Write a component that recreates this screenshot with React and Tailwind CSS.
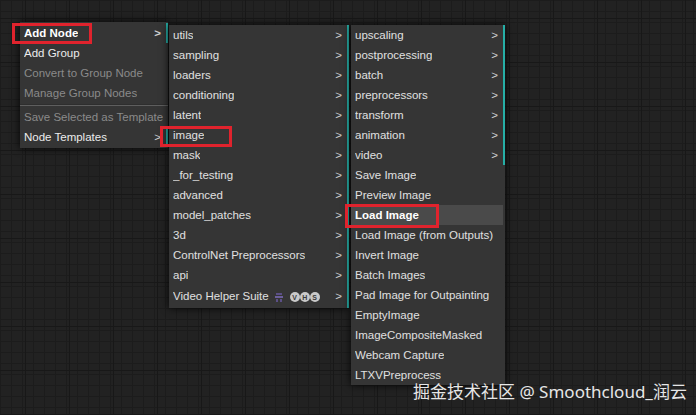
import React from 'react';

const font = "font-['Liberation_Sans',Arial,sans-serif]";

const menu1 = [
  { label: 'Add Node', sub: true, tone: 'bold' },
  { label: 'Add Group', tone: 'bright' },
  { label: 'Convert to Group Node', tone: 'off' },
  { label: 'Manage Group Nodes', tone: 'off' },
  { sep: true },
  { label: 'Save Selected as Template', tone: 'off' },
  { label: 'Node Templates', sub: true, tone: 'bright' },
];

const menu2 = [
  'utils', 'sampling', 'loaders', 'conditioning', 'latent', 'image', 'mask',
  '_for_testing', 'advanced', 'model_patches', '3d', 'ControlNet Preprocessors', 'api',
];

const menu3 = [
  { label: 'upscaling', sub: true },
  { label: 'postprocessing', sub: true },
  { label: 'batch', sub: true },
  { label: 'preprocessors', sub: true },
  { label: 'transform', sub: true },
  { label: 'animation', sub: true },
  { label: 'video', sub: true },
  { label: 'Save Image' },
  { label: 'Preview Image' },
  { label: 'Load Image', hover: true },
  { label: 'Load Image (from Outputs)' },
  { label: 'Invert Image' },
  { label: 'Batch Images' },
  { label: 'Pad Image for Outpainting' },
  { label: 'EmptyImage' },
  { label: 'ImageCompositeMasked' },
  { label: 'Webcam Capture' },
  { label: 'LTXVPreprocess' },
];

const toneClass = {
  bold: 'text-white font-bold',
  bright: 'text-[#ececec]',
  off: 'text-[#8a8a8a]',
  normal: 'text-[#e0e0e0]',
};

const Entry = ({ label, sub, tone = 'normal', hover, h = 'h-5', children }) => (
  <div
    className={`flex items-center ${h} pl-1 pt-px whitespace-nowrap ${toneClass[tone]} ${
      sub ? 'border-r-2 border-[#26aea6]' : 'mr-[2px]'
    } ${hover ? 'bg-[#4a4a4a] text-white font-bold' : ''}`}
  >
    <span className="overflow-hidden">{label}</span>
    {children}
    {sub && <span className="ml-auto pl-1 mr-[5px] text-[#cfcfcf]">&gt;</span>}
  </div>
);

const VhsBadge = () => (
  <span className="flex items-center ml-[6px]">
    <svg width="8" height="11" viewBox="0 0 8 11" className="mr-[7px]">
      <rect x="1" y="1" width="6" height="2" fill="#5b4f86" />
      <rect x="0" y="4" width="8" height="2" fill="#6c5f9c" />
      <rect x="1" y="7" width="2" height="3" fill="#5b4f86" />
      <rect x="5" y="7" width="2" height="3" fill="#5b4f86" />
    </svg>
    {['V', 'H', 'S'].map((c) => (
      <span
        key={c}
        className="w-[10px] h-[10px] rounded-full bg-[#c9c9c9] text-[#3a3a3a] text-[7px] font-bold leading-none flex items-center justify-center"
      >
        {c}
      </span>
    ))}
  </span>
);

export default function App() {
  return (
    <div
      className={`relative w-[696px] h-[415px] overflow-hidden bg-[#222222] ${font} text-[11.5px]`}
    >
      <div className="absolute inset-0 bg-[linear-gradient(to_right,#1c1c1c_1px,transparent_1px),linear-gradient(to_bottom,#1c1c1c_1px,transparent_1px)] bg-[size:11px_11px]" />
      <div className="absolute inset-0 bg-[linear-gradient(to_right,#181818_1px,transparent_1px),linear-gradient(to_bottom,#181818_1px,transparent_1px)] bg-[size:44px_44px] bg-[position:25px_18px]" />

      {/* first menu */}
      <div className="absolute left-[20px] top-[22px] w-[148px] bg-[#353535] py-px shadow-[0_0_8px_rgba(0,0,0,0.9)]">
        {menu1.map((m, i) =>
          m.sep ? (
            <div key={i} className="my-[1px] border-t border-[#2e2e2e] border-b border-b-[#5e5e5e] h-[2px]" />
          ) : (
            <Entry key={i} {...m} />
          )
        )}
      </div>

      {/* categories */}
      <div className="absolute left-[169px] top-[25px] w-[180px] bg-[#353535] shadow-[0_0_8px_rgba(0,0,0,0.9)]">
        {menu2.map((l) => (
          <Entry key={l} label={l} sub />
        ))}
        <Entry label="Video Helper Suite" sub h="h-[23px]">
          <VhsBadge />
        </Entry>
      </div>

      {/* image nodes */}
      <div className="absolute left-[351px] top-[25px] w-[154px] bg-[#353535] shadow-[0_0_8px_rgba(0,0,0,0.9)]">
        {menu3.map((m) => (
          <Entry key={m.label} {...m} />
        ))}
      </div>

      {/* annotation boxes */}
      <div className="absolute left-[12px] top-[23px] w-[80px] h-[21px] border-[3px] border-[#e0232d]" />
      <div className="absolute left-[160px] top-[126px] w-[72px] h-[21px] border-[3px] border-[#e0232d]" />
      <div className="absolute left-[345px] top-[204px] w-[94px] h-[24px] border-[3px] border-[#e0232d]" />

      <div className="absolute left-[413px] top-[380px] text-[17px] leading-6 text-[#e6e6e6] font-['Noto_Sans','Noto_Sans_CJK_SC',sans-serif] whitespace-nowrap">
        掘金技术社区 @ Smoothcloud_润云
      </div>
    </div>
  );
}
